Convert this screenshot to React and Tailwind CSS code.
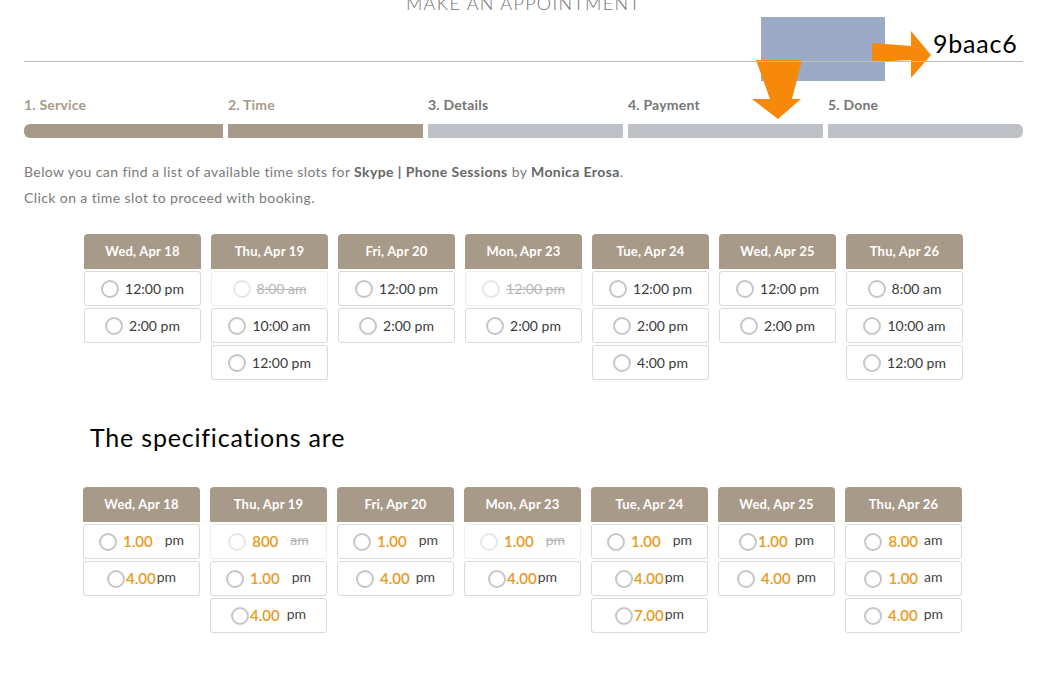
import React from 'react'

const font = { fontFamily: 'Lato, "Open Sans", sans-serif' }

const steps = [
  { label: '1. Service', done: true },
  { label: '2. Time', done: true },
  { label: '3. Details', done: false },
  { label: '4. Payment', done: false },
  { label: '5. Done', done: false }
]

const days = [
  { day: 'Wed, Apr 18', slots: [{ t: '12:00 pm' }, { t: '2:00 pm' }] },
  { day: 'Thu, Apr 19', slots: [{ t: '8:00 am', off: true }, { t: '10:00 am' }, { t: '12:00 pm' }] },
  { day: 'Fri, Apr 20', slots: [{ t: '12:00 pm' }, { t: '2:00 pm' }] },
  { day: 'Mon, Apr 23', slots: [{ t: '12:00 pm', off: true }, { t: '2:00 pm' }] },
  { day: 'Tue, Apr 24', slots: [{ t: '12:00 pm' }, { t: '2:00 pm' }, { t: '4:00 pm' }] },
  { day: 'Wed, Apr 25', slots: [{ t: '12:00 pm' }, { t: '2:00 pm' }] },
  { day: 'Thu, Apr 26', slots: [{ t: '8:00 am' }, { t: '10:00 am' }, { t: '12:00 pm' }] }
]

// the pasted "specifications" copy, spacing is uneven on purpose
const specs = [
  { day: 'Wed, Apr 18', slots: [{ n: '1.00', u: 'pm', sp: true }, { n: '4.00', u: 'pm', tight: true }] },
  { day: 'Thu, Apr 19', slots: [{ n: '800', u: 'am', off: true, sp: true }, { n: '1.00', u: 'pm', sp: true }, { n: '4.00', u: 'pm', sp: true, tight: true }] },
  { day: 'Fri, Apr 20', slots: [{ n: '1.00', u: 'pm', sp: true }, { n: '4.00', u: 'pm' }] },
  { day: 'Mon, Apr 23', slots: [{ n: '1.00', u: 'pm', off: true, sp: true }, { n: '4.00', u: 'pm', tight: true }] },
  { day: 'Tue, Apr 24', slots: [{ n: '1.00', u: 'pm', sp: true }, { n: '4.00', u: 'pm', tight: true }, { n: '7.00', u: 'pm', tight: true }] },
  { day: 'Wed, Apr 25', slots: [{ n: '1.00', u: 'pm', sp: true, tight: true }, { n: '4.00', u: 'pm' }] },
  { day: 'Thu, Apr 26', slots: [{ n: '8.00', u: 'am' }, { n: '1.00', u: 'am' }, { n: '4.00', u: 'pm' }] }
]

const Radio = ({ off }) => (
  <span
    className={`inline-block w-[18px] h-[18px] rounded-full border-2 bg-white shrink-0 ${
      off ? 'border-[#e6e6e6]' : 'border-[#c6c6c6]'
    }`}
  />
)

const DayHeader = ({ day }) => (
  <div className="h-[35px] rounded-t-[4px] bg-[#a89a89] flex items-center justify-center text-[13px] font-bold text-white tracking-[0.2px]">
    {day}
  </div>
)

const Slot = ({ off, children, tight }) => (
  <div
    className={`h-[35px] mt-[2px] rounded-[3px] border bg-white flex items-center justify-center ${
      tight ? 'gap-[1px]' : 'gap-[6px]'
    } ${off ? 'border-[#eeeeee]' : 'border-[#d9d9d9]'}`}
  >
    <Radio off={off} />
    {children}
  </div>
)

const Arrows = () => (
  <svg className="absolute left-0 top-0 pointer-events-none" width="1063" height="130">
    <rect x="761" y="17" width="124" height="64" fill="#9baac6" />
    <polygon points="872,43 911,46 911,31 931,55 911,78 911,60 872,62" fill="#f7890a" />
    <polygon points="756,60 802,60 792,99 801,99 778,119 752,99 770,99" fill="#f7890a" />
  </svg>
)

export default function App() {
  return (
    <div className="relative w-[1063px] h-[680px] overflow-hidden bg-white" style={font}>
      <Arrows />
      <div className="relative w-[999px] ml-[24px] flex flex-col">
        <div className="h-[62px] flex flex-col border-b border-[#bcbcbc]">
          <div className="-mt-[8px] text-center text-[18px] leading-[22px] tracking-[1.3px] font-light text-[#6f6f6f]">
            MAKE AN APPOINTMENT
          </div>
        </div>
        <div className="absolute left-[909px] top-[28px] text-[25px] leading-[30px] tracking-[0.8px] text-black">9baac6</div>

        <div className="flex gap-[5px] mt-[34px]">
          {steps.map((s, i) => (
            <div key={s.label} className={i === 0 ? 'w-[199px]' : 'w-[195px]'}>
              <div
                className={`text-[14px] font-bold leading-[18px] tracking-[0.2px] ${
                  s.done ? 'text-[#a89a89]' : 'text-[#767676]'
                }`}
              >
                {s.label}
              </div>
              <div
                className={`h-[14px] mt-[10px] ${s.done ? 'bg-[#a89a89]' : 'bg-[#bdc1c5]'} ${
                  i === 0 ? 'rounded-l-[6px]' : ''
                } ${i === 4 ? 'rounded-r-[6px]' : ''}`}
              />
            </div>
          ))}
        </div>

        <div className="mt-[21px] text-[14px] leading-[26px] tracking-[0.4px] text-[#7a7a7a]">
          <p>
            Below you can find a list of available time slots for{' '}
            <b className="text-[#666]">Skype | Phone Sessions</b> by <b className="text-[#666]">Monica Erosa</b>.
          </p>
          <p>Click on a time slot to proceed with booking.</p>
        </div>

        <div className="grid grid-cols-7 gap-[10px] w-[879px] mx-auto mt-[23px]">
          {days.map((d) => (
            <div key={d.day}>
              <DayHeader day={d.day} />
              {d.slots.map((s) => (
                <Slot key={s.t} off={s.off}>
                  <span className={`text-[14px] ${s.off ? 'text-[#b5b5b5] line-through' : 'text-[#3a3a3a]'}`}>{s.t}</span>
                </Slot>
              ))}
            </div>
          ))}
        </div>

        <div className="mt-[42px] ml-[66px] text-[25px] leading-[30px] tracking-[0.8px] text-black">The specifications are</div>

        <div className="grid grid-cols-7 gap-[10px] w-[879px] ml-[59px] mt-[35px]">
          {specs.map((d) => (
            <div key={d.day}>
              <DayHeader day={d.day} />
              {d.slots.map((s, i) => (
                <Slot key={i} off={s.off} tight={s.tight}>
                  <span className="text-[15px] font-semibold text-[#e89a1e]">{s.n}</span>
                  <span
                    className={`text-[14px] -mt-[4px] ${s.sp ? 'ml-[6px]' : ''} ${
                      s.off ? 'text-[#b5b5b5] line-through' : 'text-[#444]'
                    }`}
                  >
                    {s.u}
                  </span>
                </Slot>
              ))}
            </div>
          ))}
        </div>
      </div>
    </div>
  )
}
